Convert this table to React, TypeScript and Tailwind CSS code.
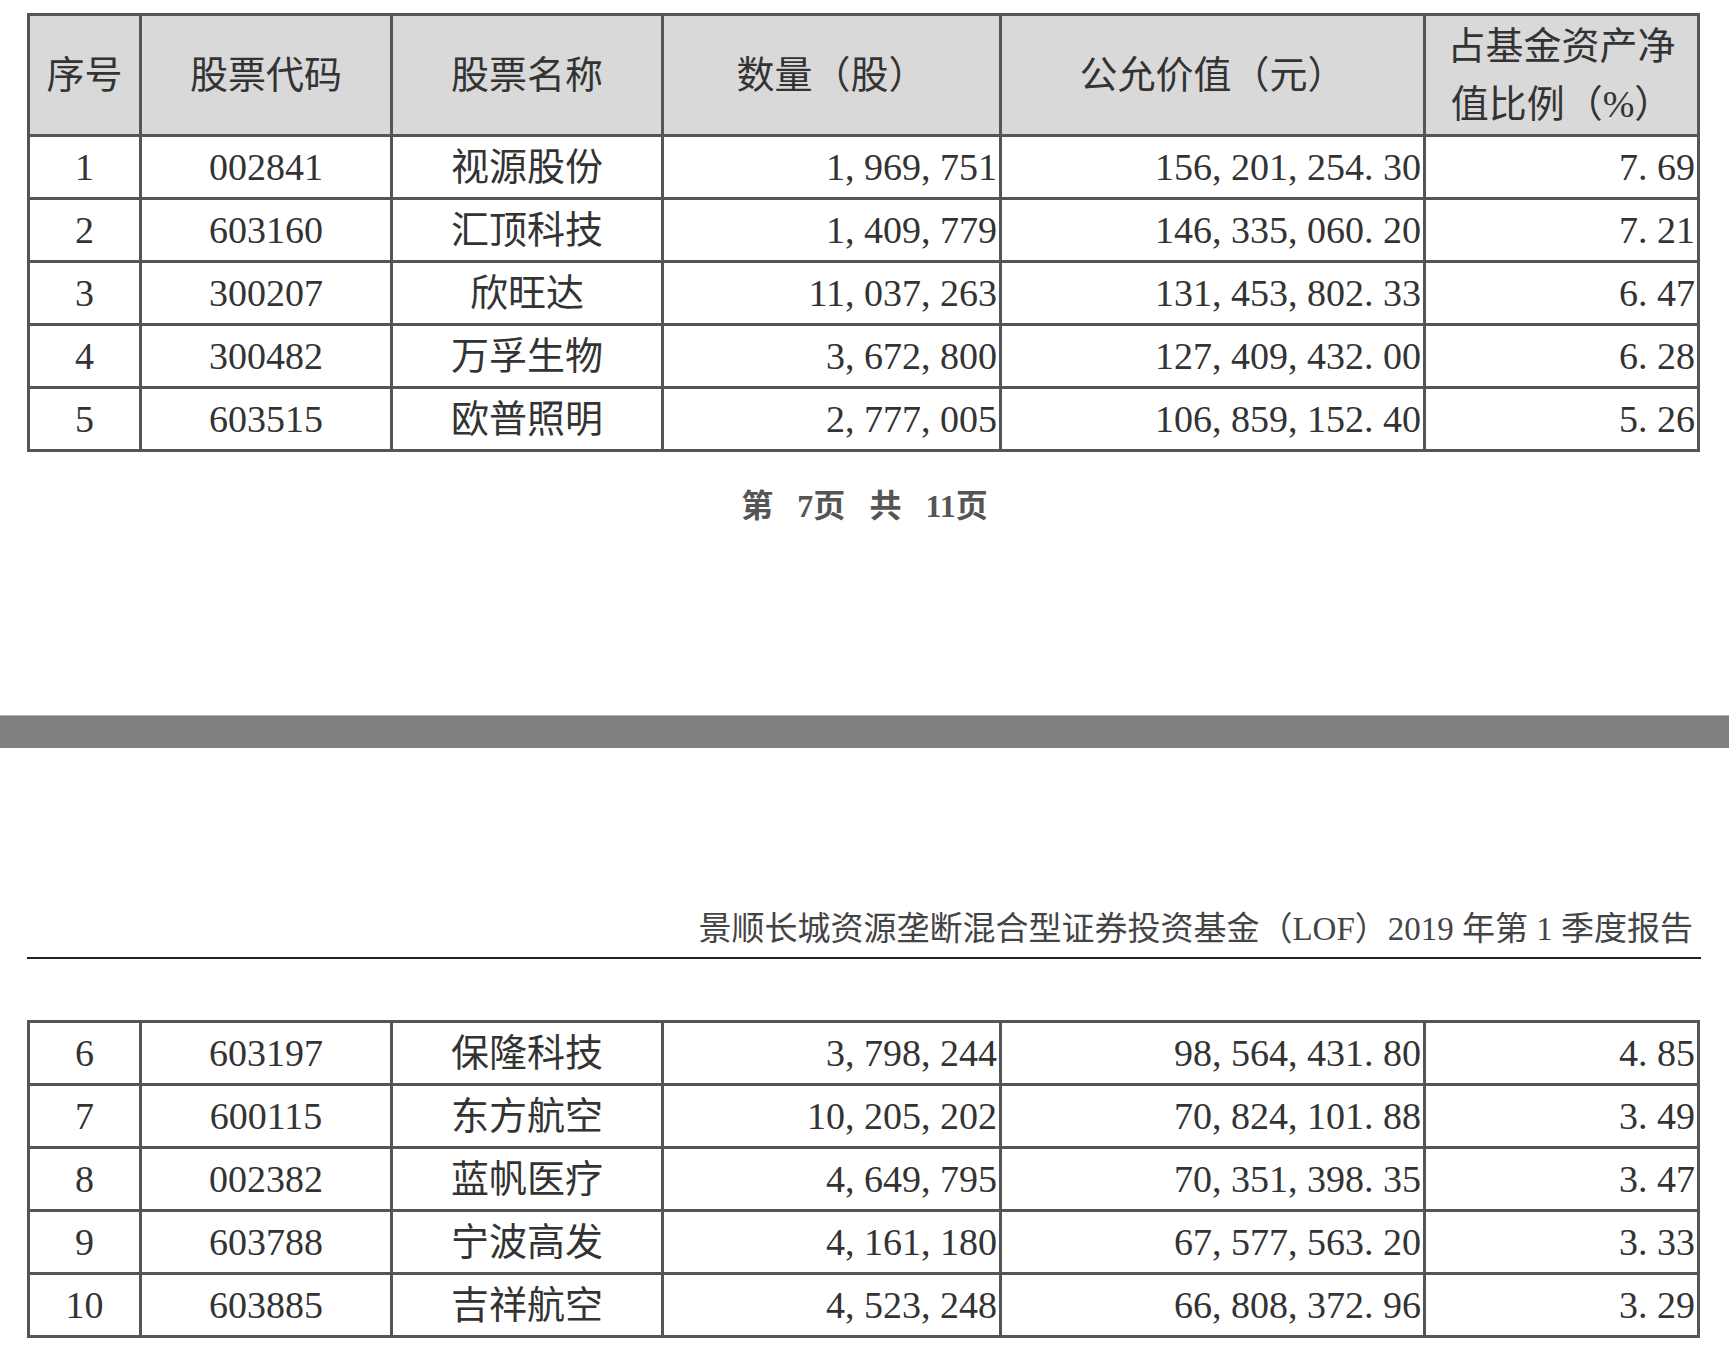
const topRows = [
  ['1', '002841', '视源股份', '1, 969, 751', '156, 201, 254. 30', '7. 69'],
  ['2', '603160', '汇顶科技', '1, 409, 779', '146, 335, 060. 20', '7. 21'],
  ['3', '300207', '欣旺达', '11, 037, 263', '131, 453, 802. 33', '6. 47'],
  ['4', '300482', '万孚生物', '3, 672, 800', '127, 409, 432. 00', '6. 28'],
  ['5', '603515', '欧普照明', '2, 777, 005', '106, 859, 152. 40', '5. 26'],
];

const bottomRows = [
  ['6', '603197', '保隆科技', '3, 798, 244', '98, 564, 431. 80', '4. 85'],
  ['7', '600115', '东方航空', '10, 205, 202', '70, 824, 101. 88', '3. 49'],
  ['8', '002382', '蓝帆医疗', '4, 649, 795', '70, 351, 398. 35', '3. 47'],
  ['9', '603788', '宁波高发', '4, 161, 180', '67, 577, 563. 20', '3. 33'],
  ['10', '603885', '吉祥航空', '4, 523, 248', '66, 808, 372. 96', '3. 29'],
];

function Cols() {
  return (
    <colgroup>
      <col className="w-[112px]" />
      <col className="w-[251px]" />
      <col className="w-[271px]" />
      <col className="w-[338px]" />
      <col className="w-[424px]" />
      <col className="w-[274px]" />
    </colgroup>
  );
}

function BodyRows({ rows }: { rows: string[][] }) {
  return (
    <tbody>
      {rows.map((r) => (
        <tr key={r[0]} className="h-[63px]">
          <td className="border-[3px] border-[#555] text-center">{r[0]}</td>
          <td className="border-[3px] border-[#555] text-center">{r[1]}</td>
          <td className="border-[3px] border-[#555] text-center">{r[2]}</td>
          <td className="border-[3px] border-[#555] pr-[2px] text-right whitespace-pre">{r[3]}</td>
          <td className="border-[3px] border-[#555] pr-[2px] text-right whitespace-pre">{r[4]}</td>
          <td className="border-[3px] border-[#555] pr-[2px] text-right whitespace-pre">{r[5]}</td>
        </tr>
      ))}
    </tbody>
  );
}

export default function App() {
  return (
    <div className="min-h-screen bg-white font-['Liberation_Serif','Noto_Sans_CJK_SC',serif] text-[#333]">
      <div className="px-[27px] pt-[13px]">
        <table className="w-[1671px] table-fixed border-collapse border-[3px] border-[#555] text-[38px] leading-none">
          <Cols />
          <thead>
            <tr className="h-[121px] bg-[#d9d9d9]">
              <th className="border-[3px] border-[#555] font-normal">序号</th>
              <th className="border-[3px] border-[#555] font-normal">股票代码</th>
              <th className="border-[3px] border-[#555] font-normal">股票名称</th>
              <th className="border-[3px] border-[#555] font-normal">数量（股）</th>
              <th className="border-[3px] border-[#555] font-normal">公允价值（元）</th>
              <th className="border-[3px] border-[#555] font-normal leading-[58px]">
                占基金资产净
                <br />
                值比例（%）
              </th>
            </tr>
          </thead>
          <BodyRows rows={topRows} />
        </table>
      </div>

      {/* page footer */}
      <div className="mt-[32px] flex justify-center gap-[24px] text-[32px] leading-[45px] font-bold text-[#555]">
        <span>第</span>
        <span>7页</span>
        <span>共</span>
        <span>11页</span>
      </div>

      <div className="mt-[186px] h-[33px] border-t border-[#b0b0b0] bg-[#808080]" />

      <div className="mx-[27px] mt-[161px] w-[1674px] border-b-2 border-[#222] pb-[8px] text-right">
        <span className="pr-[8px] text-[33px] leading-[40px] text-[#444]">
          景顺长城资源垄断混合型证券投资基金（LOF）2019 年第 1 季度报告
        </span>
      </div>

      <div className="px-[27px] pt-[61px]">
        <table className="w-[1671px] table-fixed border-collapse border-[3px] border-[#555] text-[38px] leading-none">
          <Cols />
          <BodyRows rows={bottomRows} />
        </table>
      </div>
    </div>
  );
}
